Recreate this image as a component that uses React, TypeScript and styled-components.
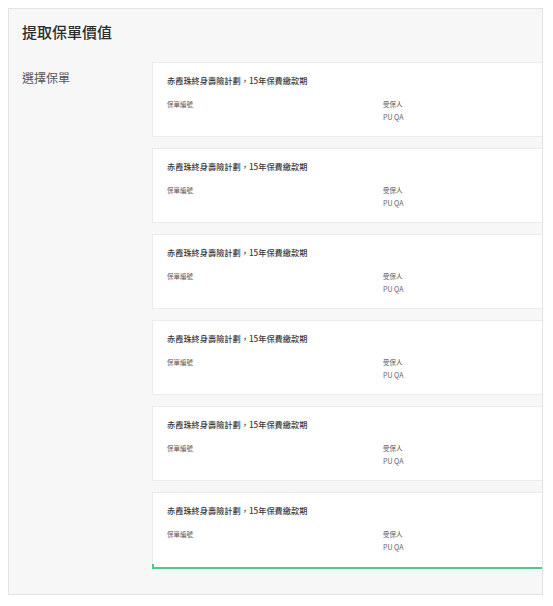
import React from "react";
import styled, { createGlobalStyle } from "styled-components";

const GlobalStyle = createGlobalStyle`
  html, body {
    margin: 0;
    padding: 0;
    background: #ffffff;
  }
  body {
    font-family: "Noto Sans CJK TC", "Noto Sans", "Liberation Sans", sans-serif;
    color: #333333;
  }
  * { box-sizing: border-box; }
`;

const Panel = styled.section`
  margin: 8px;
  width: 535px;
  height: 587px;
  background: #f7f7f7;
  border: 1px solid #e3e3e3;
  overflow: hidden;
  display: flex;
  flex-direction: column;
`;

const Header = styled.header`
  padding: 13px 13px;
  height: 46px;
`;

const Title = styled.h1`
  margin: 0;
  font-size: 15px;
  line-height: 20px;
  font-weight: 500;
  color: #2b2b2b;
`;

const Body = styled.div`
  display: flex;
  padding-top: 7px;
`;

const Label = styled.div`
  width: 143px;
  flex: none;
  padding: 8px 0 0 13px;
  font-size: 12px;
  line-height: 16px;
  color: #555555;
`;

const CardList = styled.div`
  flex: 1;
  display: flex;
  flex-direction: column;
  gap: 11px;
  margin-right: -8px;
`;

const Card = styled.div<{ $active?: boolean }>`
  position: relative;
  height: ${(p) => (p.$active ? "77px" : "75px")};
  background: #ffffff;
  border: 1px solid #ebebeb;
  border-bottom: ${(p) => (p.$active ? "2px solid #4fc98b" : "1px solid #ebebeb")};
  padding: 11px 14px 0;
  &::after {
    content: "";
    display: ${(p) => (p.$active ? "block" : "none")};
    position: absolute;
    left: -1px;
    bottom: -2px;
    width: 2px;
    height: 5px;
    background: #4fc98b;
  }
`;

const CardTitle = styled.div`
  font-size: 8.2px;
  line-height: 12px;
  font-weight: 500;
  color: #3a3a3a;
  white-space: nowrap;
`;

const InfoRow = styled.div`
  display: grid;
  grid-template-columns: 216px 1fr;
  margin-top: 14px;
`;

const Field = styled.div`
  display: flex;
  flex-direction: column;
  gap: 4px;
`;

const FieldLabel = styled.div`
  font-size: 6.5px;
  line-height: 9px;
  color: #555555;
  white-space: nowrap;
`;

const FieldValue = styled.div`
  font-size: 7px;
  line-height: 9px;
  color: #666666;
  white-space: nowrap;
`;

const policies = Array.from({ length: 6 }, (_, i) => ({
  id: i,
  name: "赤霞珠終身壽險計劃，15年保費繳款期",
  insured: "PU QA",
}));

export default function App() {
  return (
    <>
      <GlobalStyle />
      <Panel>
        <Header>
          <Title>提取保單價值</Title>
        </Header>
        <Body>
          <Label>選擇保單</Label>
          <CardList>
            {policies.map((p, i) => (
              <Card key={p.id} $active={i === policies.length - 1}>
                <CardTitle>{p.name}</CardTitle>
                <InfoRow>
                  <Field>
                    <FieldLabel>保單編號</FieldLabel>
                  </Field>
                  <Field>
                    <FieldLabel>受保人</FieldLabel>
                    <FieldValue>{p.insured}</FieldValue>
                  </Field>
                </InfoRow>
              </Card>
            ))}
          </CardList>
        </Body>
      </Panel>
    </>
  );
}
